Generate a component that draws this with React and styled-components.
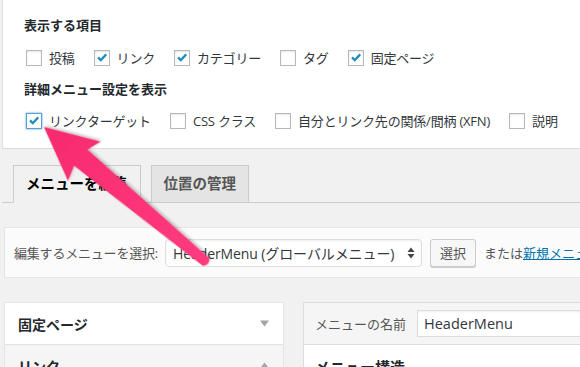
import React from "react";
import styled, { createGlobalStyle } from "styled-components";

const Global = createGlobalStyle`
  html, body { margin: 0; padding: 0; background: #f1f1f1; }
  body {
    width: 580px; height: 367px; overflow: hidden; position: relative;
    font-family: "Open Sans", "Noto Sans CJK JP", sans-serif;
    color: #32373c;
  }
  * { box-sizing: border-box; }
`;

const Page = styled.div`
  width: 580px;
  height: 367px;
  overflow: hidden;
  position: relative;
  display: flex;
  flex-direction: column;
  & > * { flex-shrink: 0; }
`;

const OptionsPanel = styled.div`
  margin-left: 2px;
  height: 149px;
  background: #fff;
  border-left: 1px solid #e1e1e1;
  border-bottom: 1px solid #dcdcdc;
  padding: 15px 0 0 21px;
  display: flex;
  flex-direction: column;
`;

const GroupTitle = styled.div`
  font-size: 13px;
  font-weight: 700;
  line-height: 20px;
  height: 20px;
  color: #23282d;
  margin-top: ${(p) => p.$mt || 0}px;
  white-space: nowrap;
`;

const OptionRow = styled.div`
  display: flex;
  align-items: center;
  gap: 19px;
  height: 20px;
  margin-top: ${(p) => p.$mt || 0}px;
  padding-left: 2px;
`;

const Option = styled.label`
  display: flex;
  align-items: center;
  gap: 7px;
  font-size: 13px;
  line-height: 20px;
  color: #32373c;
  white-space: nowrap;
  letter-spacing: -0.2px;
`;

const Box = styled.span`
  width: 16px;
  height: 16px;
  flex: 0 0 16px;
  background: #fff;
  border: 1px solid ${(p) => (p.$focus ? "#5b9dd9" : "#b4b9be")};
  box-shadow: ${(p) =>
    p.$focus
      ? "0 0 2px rgba(30,140,190,0.8)"
      : "inset 0 1px 2px rgba(0,0,0,0.1)"};
  display: flex;
  align-items: center;
  justify-content: center;
`;

const Check = () => (
  <svg width="12" height="12" viewBox="0 0 12 12">
    <path d="M1.2 6.2 L2.9 4.6 L4.8 6.6 L9.4 1.6 L11 3.2 L4.8 9.8 Z" fill="#1e8cbe" />
  </svg>
);

const CheckOption = ({ checked, focus, children }) => (
  <Option>
    <Box $focus={focus}>{checked && <Check />}</Box>
    {children}
  </Option>
);

const TabBar = styled.div`
  margin-top: 16px;
  margin-left: 2px;
  padding-left: 11px;
  display: flex;
  gap: 10px;
  border-bottom: 1px solid #cccccc;
  height: 38px;
  align-items: flex-end;
`;

const Tab = styled.div`
  height: 38px;
  margin-bottom: -1px;
  padding: 0 12px;
  display: flex;
  align-items: center;
  font-size: 14.5px;
  font-weight: 700;
  line-height: 20px;
  border: 1px solid #cccccc;
  border-bottom-color: ${(p) => (p.$active ? "#f1f1f1" : "#cccccc")};
  background: ${(p) => (p.$active ? "#f1f1f1" : "#e4e4e4")};
  color: ${(p) => (p.$active ? "#000" : "#555")};
  white-space: nowrap;
`;

const SelectBar = styled.div`
  margin: 24px 0 0 4px;
  height: 51px;
  background: #fbfbfb;
  border: 1px solid #e5e5e5;
  border-right: none;
  display: flex;
  align-items: center;
  padding-left: 9px;
  white-space: nowrap;
  overflow: hidden;
  & > * { flex-shrink: 0; }
`;

const BarLabel = styled.span`
  font-size: 13px;
  color: #555;
  margin-right: 7px;
  letter-spacing: -0.2px;
`;

const Select = styled.div`
  width: 257px;
  height: 28px;
  background: #fff;
  border: 1px solid #dddddd;
  border-radius: 4px;
  box-shadow: inset 0 1px 2px rgba(0, 0, 0, 0.07);
  display: flex;
  align-items: center;
  justify-content: space-between;
  padding: 0 6px 0 7px;
  font-size: 14px;
  color: #32373c;
  letter-spacing: -0.1px;
`;

const Updown = () => (
  <svg width="8" height="12" viewBox="0 0 8 12">
    <path d="M4 0.5 L7.5 5 L0.5 5 Z M4 11.5 L7.5 7 L0.5 7 Z" fill="#444" />
  </svg>
);

const Button = styled.div`
  margin-left: 8px;
  width: 46px;
  height: 28px;
  border: 1px solid #cccccc;
  border-radius: 3px;
  background: #f7f7f7;
  box-shadow: 0 1px 0 #ccc;
  display: flex;
  align-items: center;
  justify-content: center;
  font-size: 13px;
  color: #555;
`;

const OrText = styled.span`
  margin-left: 8px;
  font-size: 13px;
  color: #555;
`;

const Link = styled.a`
  color: #0073aa;
  text-decoration: underline;
`;

const Columns = styled.div`
  margin: 24px 0 0 4px;
  display: flex;
  gap: 19px;
  align-items: flex-start;
`;

const SideBox = styled.div`
  width: 280px;
  flex: 0 0 280px;
  background: #fff;
  border: 1px solid #e5e5e5;
`;

const SideRow = styled.div`
  height: ${(p) => p.$h || 42}px;
  padding: 0 14px 0 13px;
  display: flex;
  align-items: center;
  justify-content: space-between;
  font-size: 14px;
  font-weight: 700;
  color: #23282d;
  background: ${(p) => (p.$open ? "#f5f5f5" : "#fff")};
  border-top: ${(p) => (p.$first ? "none" : "1px solid #e1e1e1")};
`;

const Tri = ({ up }) => (
  <svg width="9" height="7" viewBox="0 0 9 7">
    <path d={up ? "M4.5 0.5 L9 6.5 L0 6.5 Z" : "M0 0.5 L9 0.5 L4.5 6.5 Z"} fill="#a0a5aa" />
  </svg>
);

const MainBox = styled.div`
  flex: 1;
  background: #fff;
  border: 1px solid #dddddd;
  border-right: none;
`;

const MainHeader = styled.div`
  height: 42px;
  background: #f5f5f5;
  border-bottom: 1px solid #dddddd;
  display: flex;
  align-items: center;
  padding-left: 11px;
  white-space: nowrap;
`;

const NameLabel = styled.span`
  font-size: 13px;
  color: #555;
  margin-right: 11px;
`;

const NameInput = styled.div`
  flex: 1;
  height: 27px;
  background: #fff;
  border: 1px solid #dddddd;
  border-right: none;
  box-shadow: inset 0 1px 2px rgba(0, 0, 0, 0.07);
  display: flex;
  align-items: center;
  padding-left: 6px;
  font-size: 14.5px;
  color: #32373c;
`;

const MainBody = styled.div`
  padding: 12px 0 0 11px;
  font-size: 15px;
  font-weight: 700;
  color: #23282d;
  line-height: 20px;
`;

const ArrowLayer = styled.svg`
  position: absolute;
  left: 0;
  top: 0;
  pointer-events: none;
`;

const Arrow = () => (
  <ArrowLayer width="580" height="367" viewBox="0 0 580 367">
    <defs>
      <filter id="sh" x="-20%" y="-20%" width="140%" height="140%">
        <feDropShadow dx="0" dy="1.5" stdDeviation="1.5" floodColor="#000" floodOpacity="0.3" />
      </filter>
      <linearGradient id="pg" x1="0" y1="0" x2="1" y2="0">
        <stop offset="0" stopColor="#ff3b7f" />
        <stop offset="1" stopColor="#f72a6f" />
      </linearGradient>
    </defs>
    <g transform="translate(206 262) rotate(219.8)" filter="url(#sh)">
      <path
        d="M0 -5 L163 -10.5 L158 -26 L211 0 L158 25 L163 10.5 L0 5 Q-5 0 0 -5 Z"
        fill="url(#pg)"
      />
    </g>
  </ArrowLayer>
);

export default function App() {
  return (
    <>
      <Global />
      <Page>
        <OptionsPanel>
          <GroupTitle>表示する項目</GroupTitle>
          <OptionRow $mt={13}>
            <CheckOption>投稿</CheckOption>
            <CheckOption checked>リンク</CheckOption>
            <CheckOption checked>カテゴリー</CheckOption>
            <CheckOption>タグ</CheckOption>
            <CheckOption checked>固定ページ</CheckOption>
          </OptionRow>
          <GroupTitle $mt={11}>詳細メニュー設定を表示</GroupTitle>
          <OptionRow $mt={12}>
            <CheckOption checked focus>リンクターゲット</CheckOption>
            <CheckOption>CSS クラス</CheckOption>
            <CheckOption>自分とリンク先の関係/間柄 (XFN)</CheckOption>
            <CheckOption>説明</CheckOption>
          </OptionRow>
        </OptionsPanel>

        <TabBar>
          <Tab $active>メニューを編集</Tab>
          <Tab>位置の管理</Tab>
        </TabBar>

        <SelectBar>
          <BarLabel>編集するメニューを選択:</BarLabel>
          <Select>
            <span>HeaderMenu (グローバルメニュー)</span>
            <Updown />
          </Select>
          <Button>選択</Button>
          <OrText>
            または<Link>新規メニュー</Link>
          </OrText>
        </SelectBar>

        <Columns>
          <SideBox>
            <SideRow $first $h={41}>
              固定ページ
              <Tri />
            </SideRow>
            <SideRow $open>
              リンク
              <Tri up />
            </SideRow>
          </SideBox>
          <MainBox>
            <MainHeader>
              <NameLabel>メニューの名前</NameLabel>
              <NameInput>HeaderMenu</NameInput>
            </MainHeader>
            <MainBody>メニュー構造</MainBody>
          </MainBox>
        </Columns>
        <Arrow />
      </Page>
    </>
  );
}
